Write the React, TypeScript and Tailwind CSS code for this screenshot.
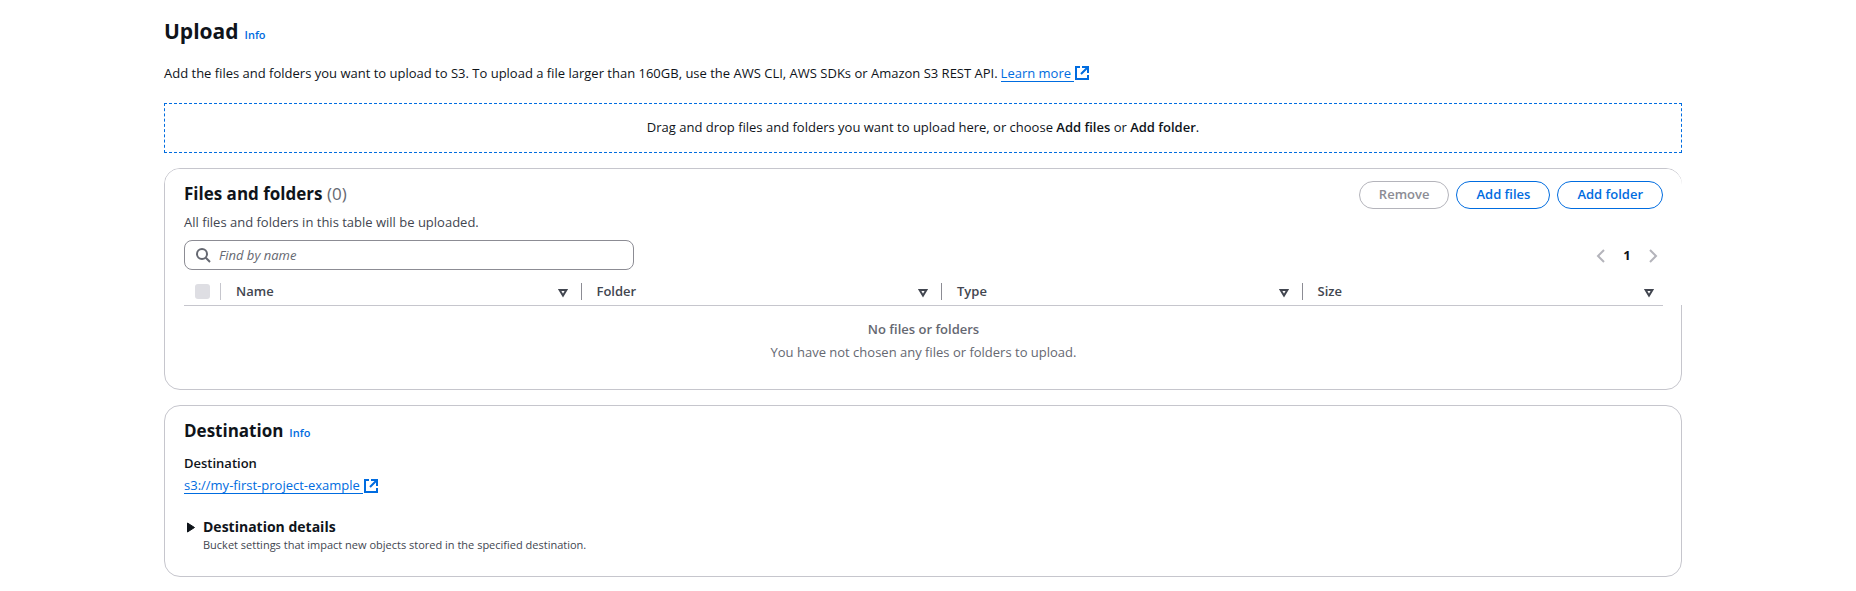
import React from "react";

const LINK = "text-[#006ce0]";

const columns = ["Name", "Folder", "Type", "Size"];

function ExternalIcon() {
  return (
    <svg viewBox="0 0 14 14" className="size-[14px] shrink-0" fill="none" stroke="currentColor" strokeWidth="2" aria-hidden="true">
      <path d="M5 1H1v12h12V9" />
      <path d="M7 1h6v6M12.5 1.5L6 8" />
    </svg>
  );
}

function ExternalLink({ children }: { children: string }) {
  return (
    <a href="#" className={`${LINK} inline-flex items-center`}>
      <span className="mr-px border-b border-[#006ce0] pr-[3px] leading-4">{children}</span>
      <ExternalIcon />
    </a>
  );
}

function InfoLink() {
  return (
    <a href="#" className={`${LINK} text-[11px] leading-4 font-semibold`}>
      Info
    </a>
  );
}

function SortIcon() {
  return (
    <svg viewBox="0 0 10 10" className="mt-[2px] size-[10px] shrink-0" fill="none" stroke="currentColor" strokeWidth="2" aria-hidden="true">
      <path d="M1.6 2h6.8L5 7.6z" />
    </svg>
  );
}

function Chevron({ d }: { d: string }) {
  return (
    <svg viewBox="0 0 16 16" className="size-4" fill="none" stroke="currentColor" strokeWidth="2" aria-hidden="true">
      <path d={d} />
    </svg>
  );
}

function ActionButton({ children, disabled = false }: { children: string; disabled?: boolean }) {
  return (
    <button
      type="button"
      disabled={disabled}
      className="h-7 rounded-full border border-[#006ce0] px-[19px] pb-[2px] text-[13px] leading-5 font-semibold text-[#006ce0] disabled:border-[#b4b4bb] disabled:text-[#8c8c94]"
    >
      {children}
    </button>
  );
}

function FilesPanel() {
  return (
    <section className="rounded-2xl border border-[#c6c6cd]">
      <div className="-mr-px rounded-tl-[15px] rounded-tr-2xl bg-white pt-3 pr-[19px] pl-[19px]">
        <div className="flex items-start justify-between">
          <h2 className="pt-px text-[17px] leading-6 font-bold">
            Files and folders <span className="font-normal text-[#656871]">(0)</span>
          </h2>
          <div className="flex gap-[7px]">
            <ActionButton disabled>Remove</ActionButton>
            <ActionButton>Add files</ActionButton>
            <ActionButton>Add folder</ActionButton>
          </div>
        </div>
        <p className="pt-[3px] leading-5 text-[#424650]">All files and folders in this table will be uploaded.</p>
        <div className="flex items-center justify-between pt-2">
          <label className="flex h-[30px] w-[450px] items-center gap-2 rounded-lg border border-[#8c8c94] pl-[10px]">
            <svg viewBox="0 0 16 16" className="size-4 shrink-0 text-[#656871]" fill="none" stroke="currentColor" strokeWidth="2" aria-hidden="true">
              <circle cx="7" cy="7" r="5" />
              <path d="M10.8 10.8L15 15" />
            </svg>
            <input
              type="text"
              aria-label="Find by name"
              placeholder="Find by name"
              className="min-w-0 flex-1 leading-5 outline-none placeholder:text-[#656871] placeholder:italic"
            />
          </label>
          <nav aria-label="Pagination" className="flex items-center gap-[10px] pt-[2px] pr-[2px]">
            <button type="button" disabled aria-label="Previous page" className="text-[#b4b4bb]">
              <Chevron d="M11 2L5 8l6 6" />
            </button>
            <button type="button" aria-label="Page 1" className="w-4 font-bold">
              1
            </button>
            <button type="button" disabled aria-label="Next page" className="text-[#b4b4bb]">
              <Chevron d="M5 2l6 6-6 6" />
            </button>
          </nav>
        </div>
      </div>
      <div className="pr-[18px] pl-[19px]">
        <table className="w-full table-fixed border-collapse">
          <thead>
            <tr className="border-b border-[#c6c6cd]">
              <th scope="col" className="w-[37px] px-0 pt-[13px] pb-[5px]">
                <div className="flex h-[17px] items-center justify-between border-r border-[#c6c6cd] pl-[11px]">
                  <input type="checkbox" disabled aria-label="Select all" className="size-[15px] appearance-none rounded-[3px] bg-[#dedee3]" />
                </div>
              </th>
              {columns.map((name) => (
                <th
                  key={name}
                  scope="col"
                  className="group relative px-0 pt-[13px] pb-[5px] last:after:absolute last:after:top-0 last:after:-right-[19px] last:after:h-full last:after:w-px last:after:bg-white"
                >
                  <div className="flex h-[17px] items-center justify-between border-r border-[#8c8c94] pr-[13px] pl-[15px] font-semibold text-[#424650] group-last:border-transparent group-last:pr-2">
                    {name}
                    <SortIcon />
                  </div>
                </th>
              ))}
            </tr>
          </thead>
          <tbody>
            <tr>
              <td colSpan={5} className="pt-[13px] pb-[27px] text-center text-[#656871]">
                <p className="leading-5 font-semibold">No files or folders</p>
                <p className="pt-[3px] leading-5">You have not chosen any files or folders to upload.</p>
              </td>
            </tr>
          </tbody>
        </table>
      </div>
    </section>
  );
}

function DestinationPanel() {
  return (
    <section className="rounded-2xl border border-[#c6c6cd] pt-[13px] pr-[18px] pb-[23px] pl-[19px]">
      <div className="flex items-baseline gap-[6px]">
        <h2 className="text-[17px] leading-6 font-bold">Destination</h2>
        <InfoLink />
      </div>
      <h3 className="pt-[10px] leading-5 font-semibold">Destination</h3>
      <p className="flex pt-1 leading-5">
        <ExternalLink>s3://my-first-project-example</ExternalLink>
      </p>
      <button type="button" aria-expanded="false" className="mt-[23px] flex items-start gap-2 text-left">
        <svg viewBox="0 0 11 20" className="h-5 w-[11px]" fill="currentColor" stroke="currentColor" strokeLinejoin="round" aria-hidden="true">
          <path d="M3.5 6v9l7-4.5z" />
        </svg>
        <span className="flex flex-col">
          <span className="text-[14px] leading-5 font-bold">Destination details</span>
          <span className="text-[11px] leading-4 text-[#424650]">Bucket settings that impact new objects stored in the specified destination.</span>
        </span>
      </button>
    </section>
  );
}

export default function App() {
  return (
    <main className="flex flex-col bg-white pt-[15px] pr-[174px] pb-3 pl-[164px] font-['Open_Sans','Noto_Sans',sans-serif] text-[13px] text-[#0f141a]">
      <div className="flex items-baseline gap-[6px]">
        <h1 className="text-[21px] leading-8 font-bold">Upload</h1>
        <InfoLink />
      </div>
      <p className="flex flex-wrap items-center gap-[3px] pt-4 leading-5">
        Add the files and folders you want to upload to S3. To upload a file larger than 160GB, use the AWS CLI, AWS SDKs or Amazon S3 REST API.
        <ExternalLink>Learn more</ExternalLink>
      </p>
      <div className="mt-5 border border-dashed border-[#006ce0] pt-[13px] pb-[15px] text-center leading-5">
        Drag and drop files and folders you want to upload here, or choose <b className="font-semibold">Add files</b> or{" "}
        <b className="font-semibold">Add folder</b>.
      </div>
      <div className="flex flex-col gap-[15px] pt-[15px]">
        <FilesPanel />
        <DestinationPanel />
      </div>
    </main>
  );
}
